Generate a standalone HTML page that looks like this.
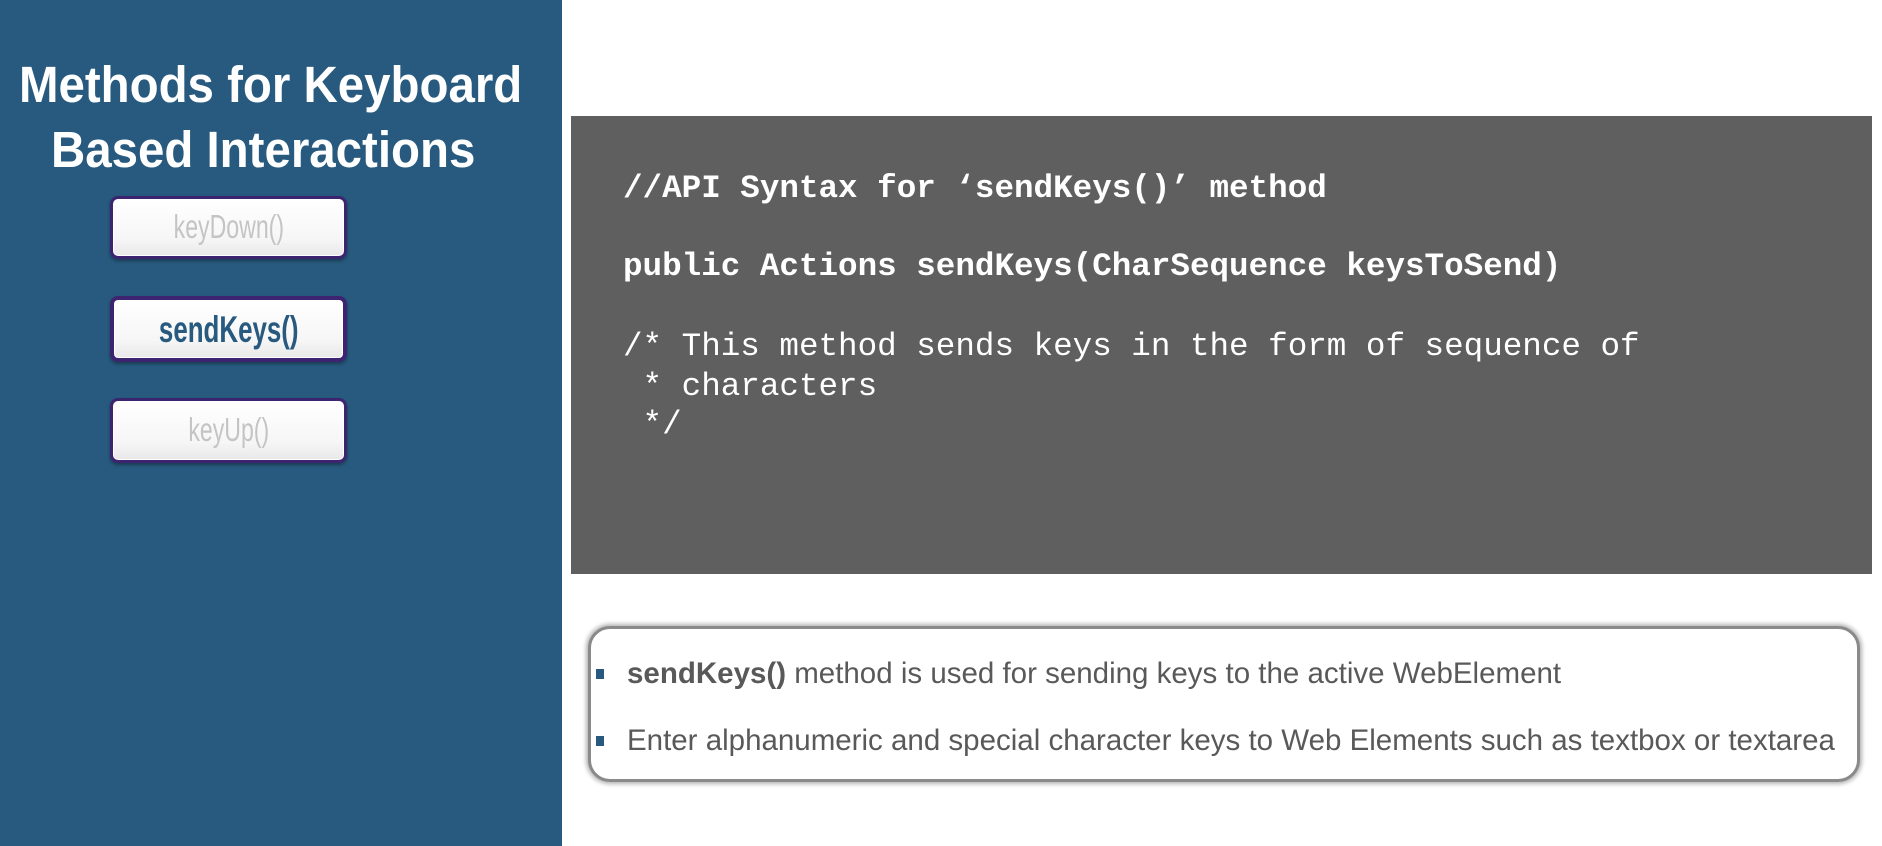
<!DOCTYPE html>
<html><head><meta charset="utf-8"><style>
*{margin:0;padding:0;box-sizing:border-box}
body{width:1882px;height:846px;background:#fff;position:relative;overflow:hidden;font-family:"Liberation Sans",sans-serif}
#left{position:absolute;left:0;top:0;width:562px;height:846px;background:#275a7e}
.t{position:absolute;left:0;width:526px;text-align:center;color:#fff;font-weight:bold;font-size:51px;white-space:nowrap}
.t span{display:inline-block;transform:scaleX(0.93)}
.btn{position:absolute;left:110px;width:237px;border:3px solid #3d2470;border-radius:8px;background:linear-gradient(#fff,#f6f6f6 70%,#e8e8e8);box-shadow:0 2px 3px rgba(0,0,0,.35), inset 0 0 0 1px #fff;text-align:center;white-space:nowrap}
.btn span{display:inline-block;transform:scaleX(0.7)}
#code{position:absolute;left:571px;top:116px;width:1301px;height:458px;background:#5f5f5f;color:#fff;font-family:"Liberation Mono",monospace;font-size:32.6px}
#code div{position:absolute;left:52px;white-space:pre}
#box{position:absolute;left:588px;top:626px;width:1272px;height:156px;border:3px solid #8a8a8a;border-radius:22px;background:#fff;box-shadow:0 0 4px 2px rgba(0,0,0,.3)}
.li{position:absolute;left:36px;color:#595959;font-size:29.5px;white-space:nowrap}
.li i{position:absolute;left:-31px;top:12px;width:8px;height:10px;background:#275a7e}
</style></head><body>
<div id="left">
<div class="t" style="top:55px"><span>Methods for Keyboard</span></div>
<div class="t" style="top:120px"><span>Based Interactions</span></div>
<div class="btn" style="top:196px;height:63px;line-height:56px;color:#c4c4c4;font-size:33px"><span>keyDown()</span></div>
<div class="btn" style="top:296px;height:66px;line-height:60px;color:#275a7e;font-size:37px;font-weight:bold;border-width:4px"><span>sendKeys()</span></div>
<div class="btn" style="top:398px;height:65px;line-height:58px;color:#c4c4c4;font-size:33px"><span>keyUp()</span></div>
</div>
<div id="code">
<div style="top:54px;font-weight:bold">//API Syntax for ‘sendKeys()’ method</div>
<div style="top:132px;font-weight:bold">public Actions sendKeys(CharSequence keysToSend)</div>
<div style="top:212px">/* This method sends keys in the form of sequence of</div>
<div style="top:252px"> * characters</div>
<div style="top:290px"> */</div>
</div>
<div id="box">
<div class="li" style="top:28px"><i></i><b>sendKeys()</b> method is used for sending keys to the active WebElement</div>
<div class="li" style="top:95px"><i></i>Enter alphanumeric and special character keys to Web Elements such as textbox or textarea</div>
</div>
</body></html>
